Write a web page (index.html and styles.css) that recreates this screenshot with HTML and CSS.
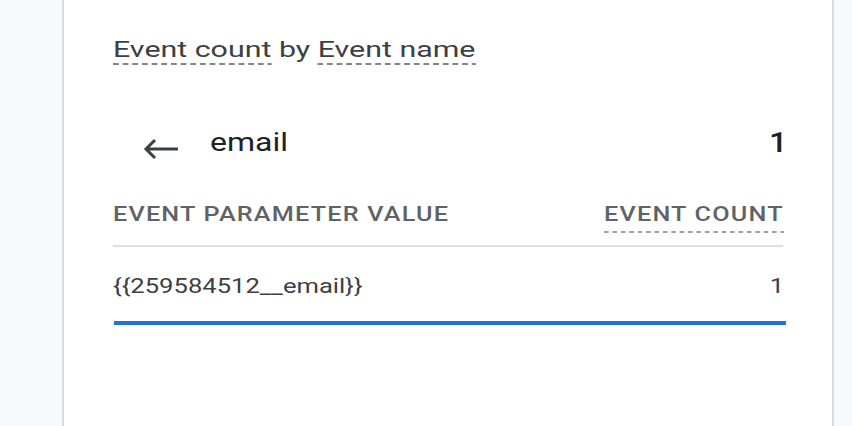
FILE: index.html
```html
<!DOCTYPE html>
<html>
<head>
<meta charset="utf-8">
<link rel="stylesheet" href="styles.css">
</head>
<body>
<div class="card">
  <div class="title">
    <span class="title-text"><span class="dim">Event count</span> by <span class="dim">Event name</span></span>
  </div>
  <div class="drill">
    <svg class="back" width="37" height="22" viewBox="0 0 37 22">
      <path d="M36 11H4M13 2L4 11L13 20" fill="none" stroke="#3c4043" stroke-width="3"/>
    </svg>
    <span class="drill-name">email</span>
    <span class="drill-value">1</span>
  </div>
  <div class="thead">
    <span class="th th-left">Event parameter value</span>
    <span class="th th-right">Event count</span>
  </div>
  <div class="divider"></div>
  <div class="trow">
    <span class="td td-left">{{259584512__email}}</span>
    <span class="td td-right">1</span>
  </div>
  <div class="bar"></div>
</div>
</body>
</html>
```
FILE: styles.css
```css
html, body {
  margin: 0;
  padding: 0;
  background: #f8f9fa;
  height: 426px;
  overflow: hidden;
}
.card {
  box-sizing: border-box;
  margin-left: 62px;
  width: 772px;
  height: 426px;
  background: #fff;
  border-left: 2px solid #dadce0;
  border-right: 2px solid #dadce0;
  padding: 36px 49px 0 49px;
  font-family: Roboto, "Liberation Sans", sans-serif;
}
.title {
  height: 30px;
  font-size: 22px;
  line-height: 28px;
  color: #3c4043;
  white-space: nowrap;
}
.title-text {
  display: inline-block;
  transform: scaleX(1.38);
  transform-origin: left center;
}
.dim {
  display: inline-block;
  padding-bottom: 1px;
  background-image: linear-gradient(to right, #80868b 4px, transparent 4px);
  background-size: 7px 2px;
  background-repeat: repeat-x;
  background-position: 0 100%;
}
.drill {
  display: flex;
  align-items: center;
  height: 40px;
  margin-top: 57px;
}
.back {
  margin: 11px 31px 0 29px;
  flex: none;
}
.drill-name {
  font-size: 25px;
  line-height: 40px;
  color: #202124;
  transform: scaleX(1.28);
  transform-origin: left center;
}
.drill-value {
  margin-left: auto;
  margin-right: -4px;
  font-size: 27px;
  font-weight: 500;
  color: #202124;
  line-height: 40px;
  transform: scaleX(1.2);
  transform-origin: right center;
}
.thead {
  display: flex;
  justify-content: space-between;
  align-items: flex-start;
  margin-top: 37px;
  font-size: 21px;
  line-height: 28px;
  font-weight: 500;
  letter-spacing: 1px;
  text-transform: uppercase;
  color: #5f6368;
  white-space: nowrap;
}
.th-left {
  transform: scaleX(1.2);
  transform-origin: left top;
}
.th-right {
  padding-bottom: 5px;
  margin-right: -1px;
  transform: scaleX(1.2);
  transform-origin: right top;
  background-image: linear-gradient(to right, #9aa0a6 4px, transparent 4px);
  background-size: 7px 2px;
  background-repeat: repeat-x;
  background-position: 0 100%;
}
.divider {
  height: 2px;
  background: #e0e0e0;
  margin-top: 12px;
}
.trow {
  display: flex;
  justify-content: space-between;
  margin-top: 25px;
  font-size: 20px;
  line-height: 28px;
  color: #3c4043;
  white-space: nowrap;
}
.td-left {
  transform: scaleX(1.28);
  transform-origin: left center;
}
.td-right {
  margin-right: -1px;
  transform: scaleX(1.28);
  transform-origin: right center;
}
.bar {
  height: 4px;
  background: #2373d6;
  margin: 21px -3px 0 1px;
}
```
